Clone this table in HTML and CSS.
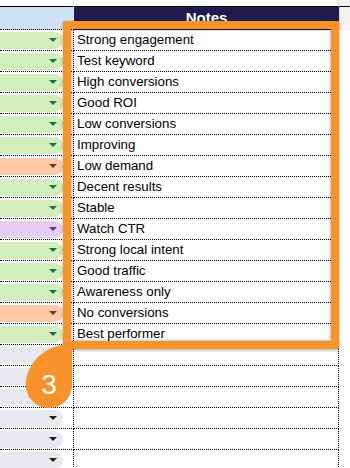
FILE: index.html
```html
<!DOCTYPE html>
<html lang="en">
<head>
<meta charset="UTF-8">
<meta name="viewport" content="width=device-width, initial-scale=1.0">
<title>Keyword Notes</title>
<link rel="stylesheet" href="styles.css">
</head>
<body>
<div class="sheet">
  <div class="row top">
    <div class="cell status"></div>
    <div class="cell notes"></div>
    <div class="cell spare"></div>
  </div>
  <div class="row head">
    <div class="cell status"></div>
    <div class="cell notes">Notes</div>
    <div class="cell spare"></div>
  </div>

  <div class="row"><div class="cell status"><span class="chip green"><i></i></span></div><div class="cell notes">Strong engagement</div></div>
  <div class="row"><div class="cell status"><span class="chip green"><i></i></span></div><div class="cell notes">Test keyword</div></div>
  <div class="row"><div class="cell status"><span class="chip green"><i></i></span></div><div class="cell notes">High conversions</div></div>
  <div class="row"><div class="cell status"><span class="chip green"><i></i></span></div><div class="cell notes">Good ROI</div></div>
  <div class="row"><div class="cell status"><span class="chip green"><i></i></span></div><div class="cell notes">Low conversions</div></div>
  <div class="row"><div class="cell status"><span class="chip green"><i></i></span></div><div class="cell notes">Improving</div></div>
  <div class="row"><div class="cell status"><span class="chip orange"><i></i></span></div><div class="cell notes">Low demand</div></div>
  <div class="row"><div class="cell status"><span class="chip green"><i></i></span></div><div class="cell notes">Decent results</div></div>
  <div class="row"><div class="cell status"><span class="chip green"><i></i></span></div><div class="cell notes">Stable</div></div>
  <div class="row"><div class="cell status"><span class="chip purple"><i></i></span></div><div class="cell notes">Watch CTR</div></div>
  <div class="row"><div class="cell status"><span class="chip green"><i></i></span></div><div class="cell notes">Strong local intent</div></div>
  <div class="row"><div class="cell status"><span class="chip green"><i></i></span></div><div class="cell notes">Good traffic</div></div>
  <div class="row"><div class="cell status"><span class="chip green"><i></i></span></div><div class="cell notes">Awareness only</div></div>
  <div class="row"><div class="cell status"><span class="chip orange"><i></i></span></div><div class="cell notes">No conversions</div></div>
  <div class="row"><div class="cell status"><span class="chip green"><i></i></span></div><div class="cell notes">Best performer</div></div>
  <div class="row"><div class="cell status"><span class="chip gray"><i></i></span></div><div class="cell notes"></div></div>
  <div class="row"><div class="cell status"><span class="chip gray"><i></i></span></div><div class="cell notes"></div></div>
  <div class="row"><div class="cell status"><span class="chip gray"><i></i></span></div><div class="cell notes"></div></div>
  <div class="row"><div class="cell status"><span class="chip gray"><i></i></span></div><div class="cell notes"></div></div>
  <div class="row"><div class="cell status"><span class="chip gray"><i></i></span></div><div class="cell notes"></div></div>
  <div class="row"><div class="cell status"><span class="chip gray"><i></i></span></div><div class="cell notes"></div></div>
</div>

<!-- highlight frame around the notes column and its step marker -->
<div class="frame"></div>
<div class="marker">3</div>
</body>
</html>
```

FILE: styles.css
```css
body {
  margin: 0;
  width: 350px;
  height: 468px;
  overflow: hidden;
  background-color: #fff;
  font-family: "Liberation Sans", Arial, sans-serif;
  font-size: 13.3px;
  color: #000;
}
.sheet {
  width: 350px;
}
.row {
  display: flex;
  height: 21px;
}
.cell {
  box-sizing: border-box;
  height: 100%;
  border-bottom: 1px dotted #000;
}
.status {
  width: 74px;
  border-right: 1px dotted #000;
  display: flex;
  align-items: center;
}
.notes {
  width: 265px;
  border-right: 1px dotted #000;
  padding-left: 3px;
  line-height: 20px;
  white-space: nowrap;
}
.spare {
  width: 11px;
}

/* frozen rows above the data */
.row.top {
  height: 7px;
}
.top .cell {
  border-bottom: 1px solid #000;
  border-right: 1px solid #e2e2e2;
}
.top .spare {
  background-color: #f3f3f3;
}
.row.head {
  height: 23px;
}
.head .status {
  background-color: #cfe2f3;
  border-right: 1px solid #dde8f2;
}
.head .notes {
  background-color: #1f1b4f;
  color: #fff;
  font-size: 15px;
  font-weight: bold;
  text-align: center;
  line-height: 21px;
  padding-left: 0;
  border-right: none;
}
.head .spare {
  background-color: #f3f3f3;
  border-bottom: none;
  border-left: 1px solid #d8d8d8;
}

/* dropdown chips */
.chip {
  width: 63px;
  height: 17px;
  border-radius: 0 9px 9px 0;
  display: flex;
  align-items: center;
  justify-content: flex-end;
  padding-right: 6px;
  box-sizing: border-box;
}
.chip i {
  width: 0;
  height: 0;
  border-left: 4px solid transparent;
  border-right: 4px solid transparent;
  border-top: 4px solid currentColor;
}
.chip.green {
  background-color: #d4edbc;
  color: #11734b;
}
.chip.orange {
  background-color: #ffc8aa;
  color: #753800;
}
.chip.purple {
  background-color: #e6cff2;
  color: #5a3286;
}
.chip.gray {
  background-color: #e8eaed;
  color: #1f1f1f;
}

.frame {
  position: absolute;
  left: 63px;
  top: 21px;
  width: 276px;
  height: 328px;
  box-sizing: border-box;
  border: 8px solid #f8922b;
  box-shadow: 0 1px 3px rgba(0, 0, 0, 0.35), inset 0 0 3px 1px rgba(0, 0, 0, 0.25);
}
.marker {
  position: absolute;
  left: 26px;
  top: 344px;
  width: 46px;
  height: 64px;
  border-radius: 46px 0 23px 23px / 41px 0 23px 23px;
  background-color: #f8922b;
  box-shadow: 0 0 2px rgba(0, 0, 0, 0.2);
  color: #fff;
  font-size: 28px;
  line-height: 46px;
  display: flex;
  align-items: flex-end;
  justify-content: center;
}
```
